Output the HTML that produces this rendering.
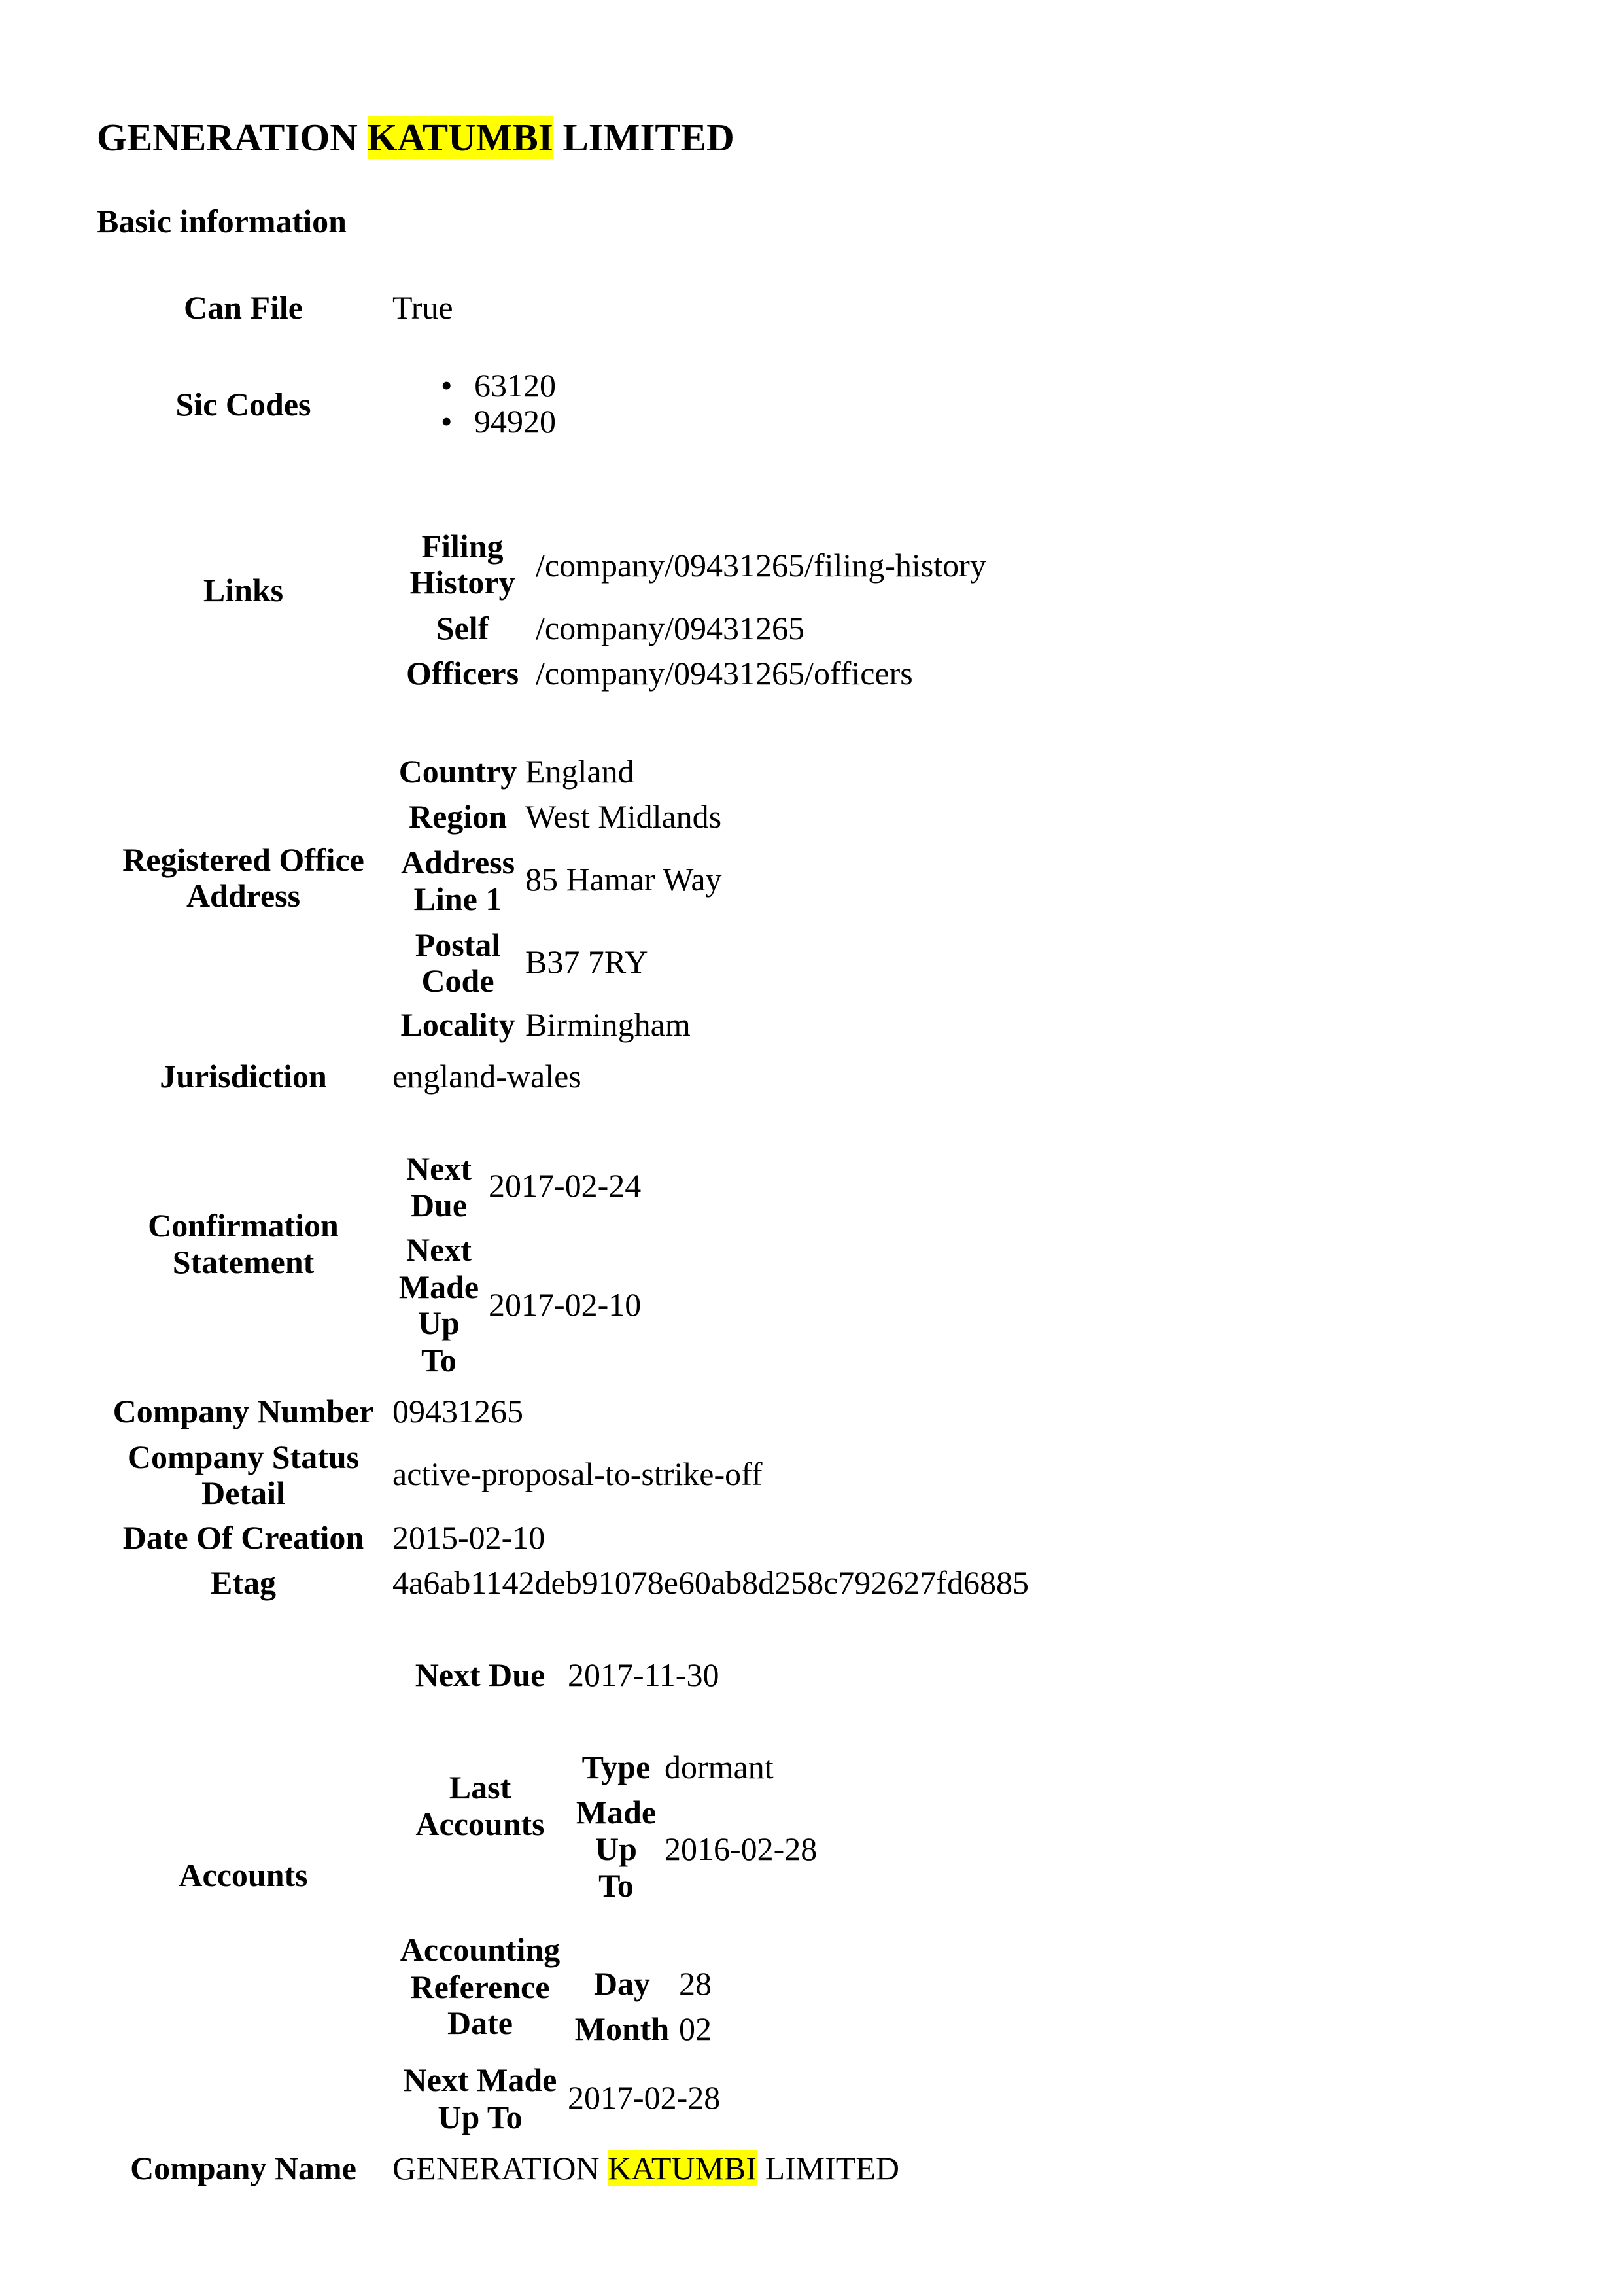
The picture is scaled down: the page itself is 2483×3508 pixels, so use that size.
<!DOCTYPE html>
<html><head><meta charset="utf-8"><style>
html,body{margin:0;padding:0;background:#fff;width:2483px;height:3508px;overflow:hidden}
body{position:relative;font-family:"Liberation Serif",serif;color:#000;font-size:50px}
.t{position:absolute;line-height:56px;white-space:nowrap}
.b{font-weight:bold}
.c{text-align:center;width:600px}
.hl{background:#ffff00}
</style></head><body>
<div class="t b" style="left:148px;top:177px;font-size:59px;line-height:66px">GENERATION <span class="hl">KATUMBI</span> LIMITED</div>
<div class="t b" style="left:148px;top:310px">Basic information</div>

<div class="t b c" style="left:72px;top:442px">Can File</div>
<div class="t" style="left:600px;top:442px">True</div>

<div class="t b c" style="left:72px;top:590px">Sic Codes</div>
<div class="t" style="left:674px;top:561px">•</div><div class="t" style="left:725px;top:561px">63120</div>
<div class="t" style="left:674px;top:616px">•</div><div class="t" style="left:725px;top:616px">94920</div>

<div class="t b c" style="left:72px;top:874px">Links</div>
<div class="t b c" style="left:407px;top:807px">Filing</div>
<div class="t b c" style="left:407px;top:862px">History</div>
<div class="t" style="left:819px;top:836px">/company/09431265/filing-history</div>
<div class="t b c" style="left:407px;top:932px">Self</div>
<div class="t" style="left:819px;top:932px">/company/09431265</div>
<div class="t b c" style="left:407px;top:1001px">Officers</div>
<div class="t" style="left:819px;top:1001px">/company/09431265/officers</div>

<div class="t b c" style="left:72px;top:1286px">Registered Office</div>
<div class="t b c" style="left:72px;top:1341px">Address</div>
<div class="t b c" style="left:400px;top:1151px">Country</div>
<div class="t" style="left:803px;top:1151px">England</div>
<div class="t b c" style="left:400px;top:1220px">Region</div>
<div class="t" style="left:803px;top:1220px">West Midlands</div>
<div class="t b c" style="left:400px;top:1290px">Address</div>
<div class="t b c" style="left:400px;top:1346px">Line 1</div>
<div class="t" style="left:803px;top:1316px">85 Hamar Way</div>
<div class="t b c" style="left:400px;top:1416px">Postal</div>
<div class="t b c" style="left:400px;top:1471px">Code</div>
<div class="t" style="left:803px;top:1442px">B37 7RY</div>
<div class="t b c" style="left:400px;top:1538px">Locality</div>
<div class="t" style="left:803px;top:1538px">Birmingham</div>

<div class="t b c" style="left:72px;top:1617px">Jurisdiction</div>
<div class="t" style="left:600px;top:1617px">england-wales</div>

<div class="t b c" style="left:72px;top:1845px">Confirmation</div>
<div class="t b c" style="left:72px;top:1901px">Statement</div>
<div class="t b c" style="left:371px;top:1758px">Next</div>
<div class="t b c" style="left:371px;top:1814px">Due</div>
<div class="t" style="left:747px;top:1784px">2017-02-24</div>
<div class="t b c" style="left:371px;top:1882px">Next</div>
<div class="t b c" style="left:371px;top:1939px">Made</div>
<div class="t b c" style="left:371px;top:1994px">Up</div>
<div class="t b c" style="left:371px;top:2051px">To</div>
<div class="t" style="left:747px;top:1966px">2017-02-10</div>

<div class="t b c" style="left:72px;top:2129px">Company Number</div>
<div class="t" style="left:600px;top:2129px">09431265</div>
<div class="t b c" style="left:72px;top:2199px">Company Status</div>
<div class="t b c" style="left:72px;top:2254px">Detail</div>
<div class="t" style="left:600px;top:2225px">active-proposal-to-strike-off</div>
<div class="t b c" style="left:72px;top:2322px">Date Of Creation</div>
<div class="t" style="left:600px;top:2322px">2015-02-10</div>
<div class="t b c" style="left:72px;top:2391px">Etag</div>
<div class="t" style="left:600px;top:2391px">4a6ab1142deb91078e60ab8d258c792627fd6885</div>

<div class="t b c" style="left:72px;top:2838px">Accounts</div>
<div class="t b c" style="left:434px;top:2532px">Next Due</div>
<div class="t" style="left:868px;top:2532px">2017-11-30</div>
<div class="t b c" style="left:434px;top:2704px">Last</div>
<div class="t b c" style="left:434px;top:2760px">Accounts</div>
<div class="t b c" style="left:642px;top:2673px">Type</div>
<div class="t" style="left:1016px;top:2673px">dormant</div>
<div class="t b c" style="left:642px;top:2742px">Made</div>
<div class="t b c" style="left:642px;top:2798px">Up</div>
<div class="t b c" style="left:642px;top:2854px">To</div>
<div class="t" style="left:1016px;top:2798px">2016-02-28</div>
<div class="t b c" style="left:434px;top:2952px">Accounting</div>
<div class="t b c" style="left:434px;top:3009px">Reference</div>
<div class="t b c" style="left:434px;top:3064px">Date</div>
<div class="t b c" style="left:651px;top:3004px">Day</div>
<div class="t" style="left:1038px;top:3004px">28</div>
<div class="t b c" style="left:651px;top:3073px">Month</div>
<div class="t" style="left:1038px;top:3073px">02</div>
<div class="t b c" style="left:434px;top:3151px">Next Made</div>
<div class="t b c" style="left:434px;top:3208px">Up To</div>
<div class="t" style="left:868px;top:3178px">2017-02-28</div>

<div class="t b c" style="left:72px;top:3286px">Company Name</div>
<div class="t" style="left:600px;top:3286px">GENERATION <span class="hl">KATUMBI</span> LIMITED</div>
</body></html>
